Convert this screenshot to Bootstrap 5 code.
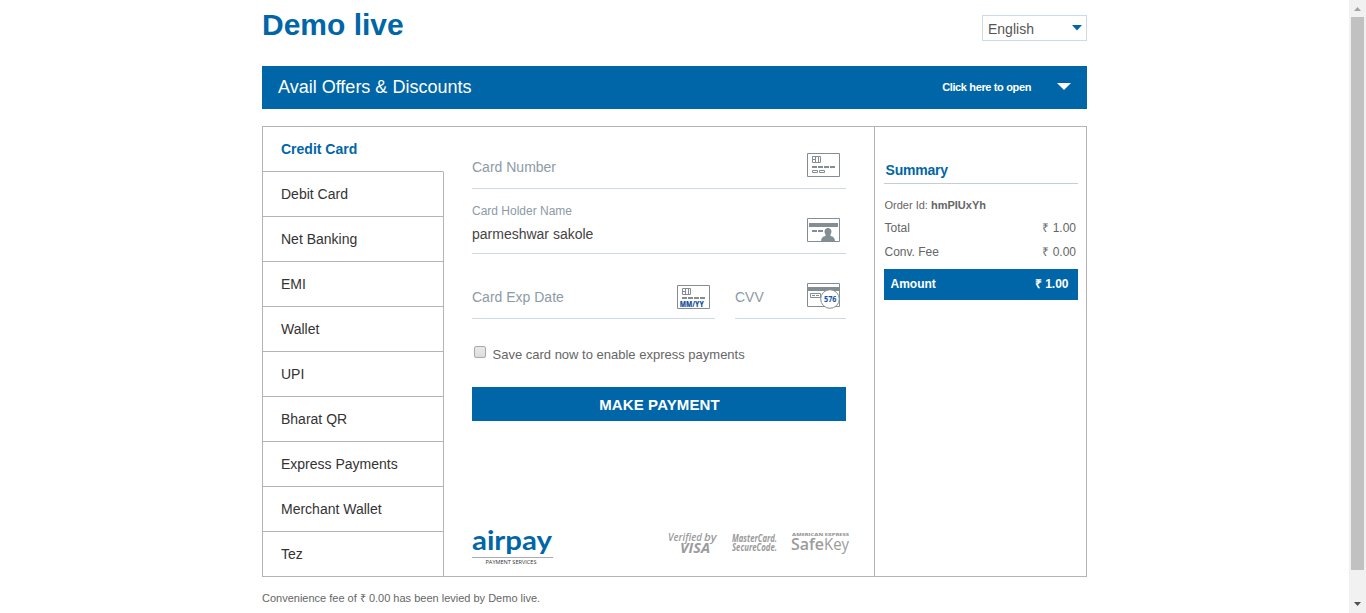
<!DOCTYPE html>
<html lang="en">
<head>
<meta charset="utf-8">
<meta name="viewport" content="width=device-width, initial-scale=1">
<title>Demo live</title>
<link href="https://cdn.jsdelivr.net/npm/bootstrap@5.3.0/dist/css/bootstrap.min.css" rel="stylesheet">
<style>
:root{--brand:#0066a7;--rule:#cfdbe3;--frame:#b4b4b4}
body{height:613px;font-family:"Liberation Sans",Arial,sans-serif;font-size:14px;line-height:20px;color:#666;background:#fff}
.page-wrap{width:825px}
.brand-text{color:var(--brand)}
.brand-fill{background:var(--brand);color:#fff}
.top-row{height:66px;padding-top:8px}
.top-row h1{font-size:30px;line-height:33px;font-weight:700}
.lang{width:105px;height:26px;margin-top:7px;border:1px solid var(--rule);padding:2px 5px 0;line-height:22px;color:#555}
.lang svg{margin-top:-3px}
.offers{height:43px;padding:0 16px 2px;font-size:18px;margin-bottom:17px}
.offers small{font-size:11px;font-weight:700;letter-spacing:-.36px}
.pay-frame{height:451px;border:1px solid var(--frame)}
.methods{width:181px}
.methods a{height:45px;padding:0 18px;line-height:44px;color:#333;border-bottom:1px solid var(--frame);border-right:1px solid var(--frame);text-decoration:none}
.methods a:first-child{border-right-color:transparent;font-weight:700;color:var(--brand)}
.methods a:last-child{border-bottom:0;height:44px}
.pay-form{width:430px;padding:0 28px}
.field{height:65px;border-bottom:1px solid var(--rule);color:#8c9ba6}
.field.first{height:62px}
.field .caption{font-size:12px;line-height:16px}
.field .value{color:#444;line-height:20px;margin-top:5px}
.save{margin-top:25px;height:20px;font-size:13px}
.save span{padding:1px 0 0 .5px}
.save input{width:12px;height:12px;appearance:none;border:1px solid #a9a9a9;border-radius:2px;background:linear-gradient(#e9e9e9,#dcdcdc);margin:2px 6px 0 2px}
.pay-btn{height:34px;margin-top:23px;border:0;border-radius:0;font-size:15px;font-weight:700;line-height:35px;padding:0 0 0 1px;letter-spacing:.12px}
.pay-btn:hover{background:var(--brand);color:#fff}
.summary{border-left:1px solid var(--frame);padding:33px 8px 0 9px;font-size:12px;line-height:16px}
.summary h2{font-size:14px;font-weight:700;line-height:20px;height:24px;border-bottom:1px solid #c3cfd4;padding-left:1.500px;letter-spacing:-.2px}
.order-id{font-size:11px;margin-top:13px;margin-bottom:7px;padding-left:.5px}
.sum-row{padding:0 2px 0 .5px}
.total{height:31px;padding:0 9.500px 0 6.500px;font-weight:700;margin-top:9px;line-height:30px}
.note{font-size:11px;margin-top:11px}
.scroll-col{width:17px;background:#f1f1f1;padding:0 2px}
.scroll-thumb{height:553px;background:#c1c1c1}
svg{overflow:visible}
</style>
</head>
<body class="d-flex overflow-hidden">
<main class="flex-grow-1">
<div class="page-wrap mx-auto">
  <header class="top-row d-flex justify-content-between align-items-start">
    <h1 class="brand-text m-0">Demo live</h1>
    <div class="lang d-flex justify-content-between align-items-center"><span>English</span>
      <svg width="10" height="6" style="margin-right:-1px"><path d="M0 0h10L5 5.500z" fill="#0066a7"/></svg></div>
  </header>
  <section class="offers brand-fill d-flex align-items-center">
    <span class="me-auto">Avail Offers &amp; Discounts</span>
    <small>Click here to open</small>
    <svg width="14" height="8" style="margin-left:26px"><path d="M0 0h14L7 7z" fill="#fff"/></svg>
  </section>
  <section class="pay-frame d-flex">
    <nav class="methods d-flex flex-column flex-shrink-0">
      <a href="#">Credit Card</a><a href="#">Debit Card</a><a href="#">Net Banking</a><a href="#">EMI</a><a href="#">Wallet</a><a href="#">UPI</a><a href="#">Bharat QR</a><a href="#">Express Payments</a><a href="#">Merchant Wallet</a><a href="#">Tez</a>
    </nav>
    <div class="pay-form d-flex flex-column flex-shrink-0">
      <div class="field first d-flex justify-content-between">
        <span style="margin-top:30px">Card Number</span>
        <svg width="33" height="25" style="margin:26px 6px 0 0" fill="none" stroke="#848e92"><path d="M.5.5h32v23H.5zM5.500 3.500h8v6h-8zM8.500 3.500v6M11.500 3.500v6M5.500 6.500h3M5.500 17.500h5v2h-5zM12.500 17.500h5v2h-5z"/><path stroke-width="2" d="M5 14h5M11 14h5M17 14h5M23 14h5"/></svg>
      </div>
      <div class="field d-flex justify-content-between">
        <div style="margin-top:14px"><div class="caption">Card Holder Name</div><div class="value">parmeshwar sakole</div></div>
        <svg width="33" height="25" style="margin:29px 6px 0 0"><path d="M.5.5h32v23H.5z" fill="none" stroke="#848e92"/><path d="M2 5h29v4H2zM5 12h5v2H5zM11 12h5v2h-5z" fill="#848e92"/><path d="M14 23.500c0-3.500 1.500-5 4.500-5.500v-1.500c-2.500-4 .3-6.500 2.500-6.500s5 2.500 2.500 6.500V18c3 .5 4.500 2 4.500 5.500z" fill="#848e92"/></svg>
      </div>
      <div class="d-flex justify-content-between">
        <div class="field d-flex justify-content-between" style="width:243px"><span style="margin-top:33px">Card Exp Date</span>
          <svg width="33" height="24" style="margin:31px 5px 0 0"><g fill="none" stroke="#848e92"><path d="M.5.5h32v23H.5zM5.500 3.500h8v6h-8zM8.500 3.500v6M11.500 3.500v6M5.500 6.500h3"/><path stroke-width="2" d="M5 13h5M11 13h5M17 13h5M23 13h5"/></g><text x="2.700" y="21.500" font-family="Open Sans,sans-serif" font-size="8" font-weight="800" fill="#1754a0" textLength="24" lengthAdjust="spacingAndGlyphs">MM/YY</text></svg>
        </div>
        <div class="field d-flex justify-content-between" style="width:111px"><span style="margin-top:33px">CVV</span>
          <svg width="34" height="27" style="margin:29px 5px 0 0"><path d="M.5.500h32v23H.5z" fill="none" stroke="#848e92"/><path d="M1 4h32v4H1z" fill="#848e92"/><path d="M3.500 10.500h10v4h-10zM5 12.500h3M9 12.500h3" fill="none" stroke="#848e92"/><circle cx="23" cy="16" r="9.300" fill="#fff" stroke="#848e92"/><text x="17" y="18.500" font-family="Open Sans,sans-serif" font-size="8" font-weight="700" fill="#1754a0" textLength="12.500" lengthAdjust="spacingAndGlyphs">576</text></svg>
        </div>
      </div>
      <label class="save d-flex"><input type="checkbox"><span>Save card now to enable express payments</span></label>
      <button class="pay-btn btn brand-fill w-100" type="button">MAKE PAYMENT</button>
      <div class="d-flex mt-auto" style="margin-bottom:8px">
        <svg class="flex-shrink-0" width="81" height="40"><text x="0" y="21.500" font-family="Lato,sans-serif" font-size="27" font-weight="700" fill="#0066a7" textLength="80" lengthAdjust="spacingAndGlyphs">airpay</text><path d="M0 29.500h81" stroke="#aaa"/><text x="13.500" y="36" font-family="Open Sans,sans-serif" font-size="5" font-weight="400" fill="#333" textLength="51" lengthAdjust="spacingAndGlyphs">PAYMENT SERVICES</text></svg>
        <svg class="flex-shrink-0" width="184" height="40" style="margin-left:114px" fill="#9b9b9b" font-family="Open Sans,sans-serif"><g font-style="italic"><text x="1" y="13" font-size="11" font-weight="600" textLength="34" lengthAdjust="spacingAndGlyphs">Verified</text><text x="37" y="13" font-size="10" font-weight="600" textLength="12.500" lengthAdjust="spacingAndGlyphs">by</text><text x="13" y="25" font-size="14" font-weight="700" textLength="30" lengthAdjust="spacingAndGlyphs">VISA</text><text x="65" y="14" font-size="10" font-weight="700" textLength="45" lengthAdjust="spacingAndGlyphs">MasterCard.</text><text x="65" y="23" font-size="10" font-weight="700" textLength="45" lengthAdjust="spacingAndGlyphs">SecureCode.</text></g><text x="125" y="7.500" font-size="4" font-weight="800" textLength="57" lengthAdjust="spacingAndGlyphs">AMERICAN EXPRESS</text><text x="124" y="21.500" font-size="15.500" textLength="33" font-weight="600" lengthAdjust="spacingAndGlyphs">Safe</text><text x="157" y="21.500" font-size="15.500" textLength="25" lengthAdjust="spacingAndGlyphs">Key</text></svg>
      </div>
    </div>
    <aside class="summary flex-grow-1">
      <h2 class="brand-text mb-0">Summary</h2>
      <div class="order-id">Order Id: <b>hmPIUxYh</b></div>
      <div class="sum-row d-flex justify-content-between mb-2"><span>Total</span><span>₹ 1.00</span></div>
      <div class="sum-row d-flex justify-content-between"><span>Conv. Fee</span><span>₹ 0.00</span></div>
      <div class="total brand-fill d-flex justify-content-between"><span>Amount</span><span>₹ 1.00</span></div>
    </aside>
  </section>
  <p class="note mb-0">Convenience fee of ₹ 0.00 has been levied by Demo live.</p>
</div>
</main>
<div class="scroll-col d-flex flex-column align-items-center flex-shrink-0">
  <svg class="flex-shrink-0" width="13" height="17"><path d="M3 11h7L6.500 7z" fill="#a3a3a3"/></svg>
  <div class="scroll-thumb w-100 flex-shrink-0"></div>
  <svg class="mt-auto flex-shrink-0" width="13" height="17"><path d="M3 6h7L6.500 10z" fill="#505050"/></svg>
</div>
<script src="https://cdn.jsdelivr.net/npm/bootstrap@5.3.0/dist/js/bootstrap.bundle.min.js"></script>
</body>
</html>
